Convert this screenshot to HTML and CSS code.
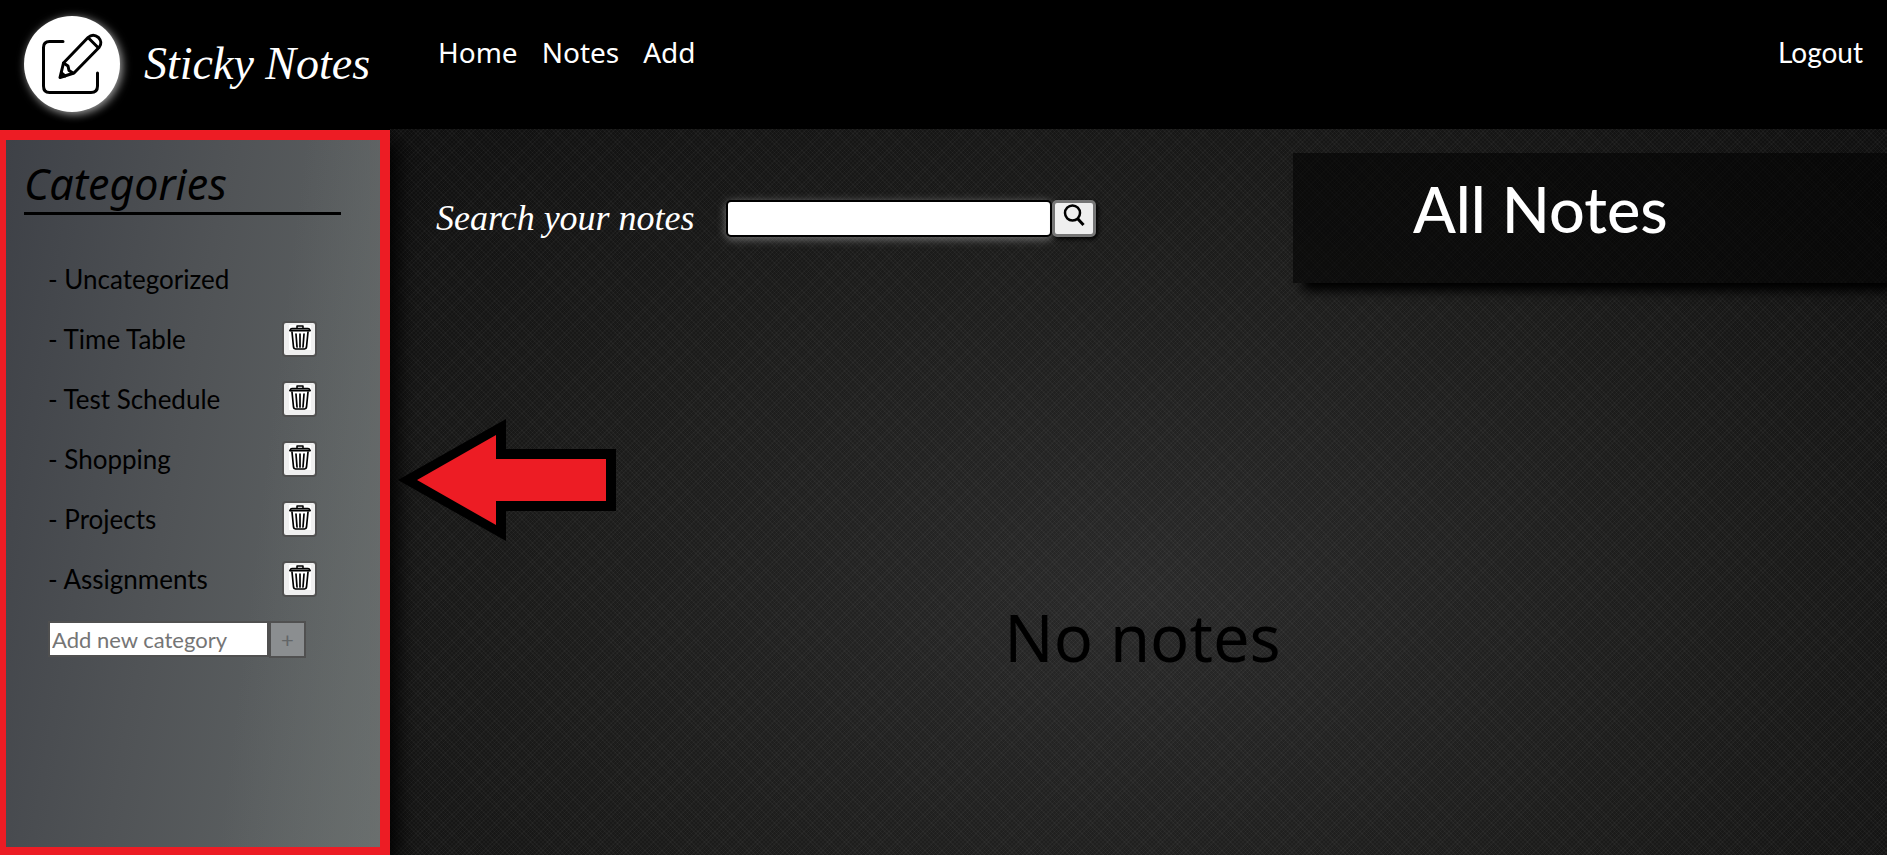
FILE: index.html
```html
<!DOCTYPE html>
<html lang="en">
<head>
<meta charset="utf-8">
<title>Sticky Notes</title>
<meta name="viewport" content="width=device-width, initial-scale=1">
<link rel="stylesheet" href="styles.css">
</head>
<body>
<svg class="sprite" aria-hidden="true">
  <symbol id="trash" viewBox="0 0 22 25">
    <rect width="22" height="25" fill="#fff"/>
    <g fill="none" stroke="#000" stroke-width="2" stroke-linejoin="round" stroke-linecap="round">
      <path d="M8 3V1h6v2" stroke-width="1.5"/>
      <path d="M1.500 5.500V4.500Q1.500 3.500 3 3.500H19Q20.500 3.500 20.500 4.500V5.500" stroke-width="1.500"/>
      <path d="M1 5.500h20" stroke-width="2"/>
      <path d="M3 7l1.500 15q.3 2 2 2h9q1.700 0 2-2L19 7" stroke-width="1.700"/>
      <path d="M7 9l1 13M11 9v13M15 9l-1 13" stroke-width="1.700"/>
    </g>
  </symbol>
</svg>
<header class="header">
  <a class="brand" href="#">
    <span class="logo">
      <svg viewBox="0 0 96 96" width="96" height="96" fill="none" stroke="#000" stroke-width="3" stroke-linecap="round" stroke-linejoin="round" aria-hidden="true">
        <path d="M39 25.500H25.500Q19.500 25.500 19.500 31.500V70Q19.500 76.500 25.500 76.500H67Q73.500 76.500 73.500 70V57"/>
        <path d="M36 61.500L39.500 47L64 21.500Q69 17 74.500 21.500Q79 26.500 75 31.500L50 57Z"/>
        <path d="M64.500 22L74 31.500M39.500 47L44 50L45 54.500L49 57M41 60L37.500 57"/>
      </svg>
    </span>
    <span class="brand-name">Sticky Notes</span>
  </a>
  <nav class="nav">
    <a href="#">Home</a>
    <a href="#">Notes</a>
    <a href="#">Add</a>
    <a class="logout" href="#">Logout</a>
  </nav>
</header>
<div class="layout">
  <aside class="sidebar">
    <h2 class="sidebar-title">Categories</h2>
    <ul class="categories">
      <li><a href="#">- Uncategorized</a></li>
      <li><a href="#">- Time Table</a><button class="delete" aria-label="Delete Time Table"><svg width="22" height="25"><use href="#trash"/></svg></button></li>
      <li><a href="#">- Test Schedule</a><button class="delete" aria-label="Delete Test Schedule"><svg width="22" height="25"><use href="#trash"/></svg></button></li>
      <li><a href="#">- Shopping</a><button class="delete" aria-label="Delete Shopping"><svg width="22" height="25"><use href="#trash"/></svg></button></li>
      <li><a href="#">- Projects</a><button class="delete" aria-label="Delete Projects"><svg width="22" height="25"><use href="#trash"/></svg></button></li>
      <li><a href="#">- Assignments</a><button class="delete" aria-label="Delete Assignments"><svg width="22" height="25"><use href="#trash"/></svg></button></li>
    </ul>
    <form class="add-form">
      <input type="text" placeholder="Add new category" aria-label="Add new category">
      <button type="button" disabled>+</button>
    </form>
  </aside>
  <main class="main">
    <div class="toolbar">
      <form class="search">
        <label for="search">Search your notes</label>
        <input id="search" type="text">
        <button type="button" aria-label="Search">
          <svg viewBox="0 0 22 24" width="22" height="24" fill="none" stroke="#000" aria-hidden="true"><circle cx="9.500" cy="10" r="7.500" stroke-width="2.500"/><path d="M14.500 15.500L20.500 22" stroke-width="3"/></svg>
        </button>
      </form>
      <h1 class="heading">All Notes</h1>
    </div>
    <p class="empty">No notes</p>
    <svg class="pointer" viewBox="0 0 220 124" width="220" height="124" aria-hidden="true">
      <path d="M0 62L108 1V31H218V93H108V123Z" fill="#000"/>
      <path d="M19 62L98 17V41H208V83H98V107Z" fill="#ed1c24"/>
    </svg>
  </main>
</div>
</body>
</html>
```
FILE: styles.css
```css
* { box-sizing: border-box; }

body {
  margin: 0;
  min-height: 100vh;
  display: flex;
  flex-direction: column;
  background: #000;
  font-family: Lato, sans-serif;
}

a { color: inherit; text-decoration: none; }
button, input { font-family: inherit; margin: 0; }
.sprite { display: none; }

.header {
  display: flex;
  padding: 16px 24px 17px;
  color: #fff;
}

.brand { display: flex; align-items: center; gap: 24px; width: 414px; }
.logo {
  width: 96px;
  height: 96px;
  border-radius: 50%;
  background: #fff;
  box-shadow: 2px 2px 10px #aaa;
}
.logo svg { display: block; }
.brand-name { font: italic 46px/52px "Liberation Serif", serif; }

.nav {
  flex: 1;
  display: flex;
  gap: 24px;
  padding-top: 18px;
  font: 28px/36px "Noto Sans", sans-serif;
}
.logout { margin-left: auto; font-family: Lato, sans-serif; }

.layout { flex: 1; display: flex; }

.sidebar {
  position: relative;
  z-index: 1;
  width: 390px;
  margin-top: 1px;
  padding: 20px 39px 24px 18px;
  border: solid #ed1c24;
  border-width: 10px 10px 8px 6px;
  background: linear-gradient(97deg, rgba(116, 121, 119, 0) 65%, rgba(116, 121, 119, .4) 100%), linear-gradient(100deg, #3e4147 0%, #505356 45%, #636868 100%);
  box-shadow: 8px 10px 20px #000;
}
.sidebar-title {
  margin: 0;
  padding-bottom: 4px;
  border-bottom: 3px solid #000;
  font: italic 43px/48px "Noto Sans", sans-serif;
}

.categories {
  margin: 34px 0 0;
  padding: 0 24px;
  list-style: none;
  font-size: 26px;
}
.categories li {
  display: flex;
  align-items: center;
  justify-content: space-between;
  height: 60px;
}
.delete {
  display: flex;
  justify-content: center;
  width: 35px;
  height: 36px;
  padding: 2px 0;
  border: 2px solid #505050;
  border-radius: 4px;
  background: #efefef;
}

.add-form { display: flex; padding: 12px 0 0 24px; }
.add-form input {
  width: 221px;
  height: 36px;
  padding: 0 2px;
  border: 2px solid #505050;
  font-size: 22px;
}
.add-form input::placeholder { color: #757575; }
.add-form button {
  width: 37px;
  height: 37px;
  padding: 0;
  border: 2px solid #505050;
  background: #8b8e90;
  color: #626567;
  font-size: 22px;
}

.main {
  position: relative;
  flex: 1;
  background:
    repeating-linear-gradient(45deg, rgba(255, 255, 255, .03) 0 1px, transparent 1px 3px),
    repeating-linear-gradient(135deg, rgba(255, 255, 255, .03) 0 1px, transparent 1px 3px),
    radial-gradient(ellipse at 50% 65%, #292929 0%, #1b1b1a 55%, #0f0f0f 100%);
}
.toolbar {
  display: flex;
  justify-content: space-between;
  align-items: flex-start;
  padding: 24px 0 0 46px;
}
.search { display: flex; align-items: center; padding-top: 41px; }
.search label {
  width: 290px;
  color: #fff;
  font: italic 36px/48px "Liberation Serif", serif;
}
.search input {
  width: 326px;
  height: 37px;
  border: 2px solid #000;
  border-radius: 5px;
  background: #fff;
  font-size: 22px;
  box-shadow: 0 2px 10px #777;
}
.search button {
  display: flex;
  justify-content: center;
  width: 44px;
  height: 37px;
  padding: 0;
  border: 3px solid #767676;
  border-radius: 5px;
  background: #efefef;
  box-shadow: 2px 2px 4px #000;
}
.heading {
  width: 594px;
  margin: 0;
  padding: 20px 120px 38px;
  background: rgba(0, 0, 0, .55);
  box-shadow: 8px 10px 10px -2px #000;
  color: #fff;
  font: 500 63px/72px Lato, sans-serif;
}
.empty {
  margin: 310px 0 0;
  padding-left: 8px;
  text-align: center;
  font: 65px/88px "Noto Sans", sans-serif;
}
.pointer { position: absolute; left: 8px; top: 289px; }
```
